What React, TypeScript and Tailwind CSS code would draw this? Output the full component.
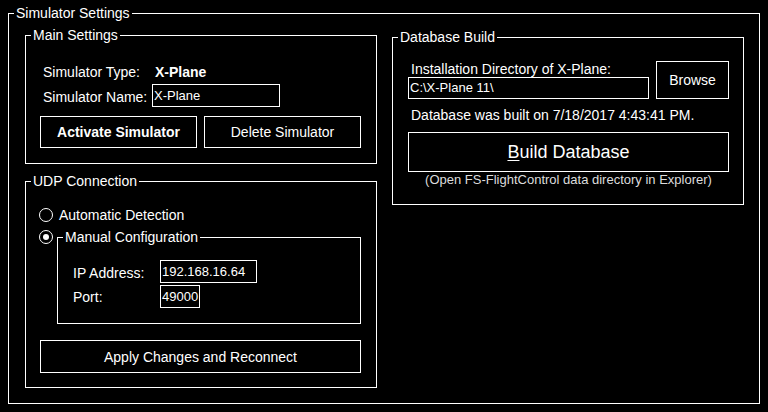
import React from "react";

type GroupProps = {
  title: string;
  className?: string;
  children?: React.ReactNode;
};

// WinForms-like group box: a fieldset with its legend sitting on the top border
const Group: React.FC<GroupProps> = ({ title, className = "", children }) => (
  <fieldset className={`border border-white min-w-0 ${className}`}>
    <legend className="ml-[5px] px-[2px] text-[14px] leading-[16px]">{title}</legend>
    {children}
  </fieldset>
);

const TextBox: React.FC<{ value: string; className?: string }> = ({ value, className = "" }) => (
  <div className={`border border-white flex items-center pl-[1px] text-[13px] leading-[16px] whitespace-nowrap ${className}`}>
    {value}
  </div>
);

const Radio: React.FC<{ checked?: boolean; className?: string }> = ({ checked, className = "" }) => (
  <span
    className={`w-[14px] h-[14px] shrink-0 rounded-full border border-white flex items-center justify-center ${className}`}
  >
    {checked && <span className="w-[6px] h-[6px] rounded-full bg-white" />}
  </span>
);

const App: React.FC = () => {
  return (
    <div className="w-[768px] h-[412px] bg-black text-white pt-[5px] pl-[8px] font-['Liberation_Sans',Arial,sans-serif] text-[14px] leading-[16px] overflow-hidden">
      <Group title="Simulator Settings" className="w-[752px] h-[399px]">
        <div className="flex gap-[15px] pl-[16px] pt-[6px]">
          {/* Left column */}
          <div className="flex flex-col gap-[9px] w-[352px]">
            <Group title="Main Settings" className="h-[137px]">
              <div className="flex flex-col pl-[14px] pt-[21px]">
                <div className="flex items-center h-[16px] pl-[3px]">
                  <span className="w-[112px]">Simulator Type:</span>
                  <span className="font-bold">X-Plane</span>
                </div>
                <div className="flex items-start mt-[4px] pl-[3px]">
                  <span className="w-[109px] mt-[5px]">Simulator Name:</span>
                  <TextBox value="X-Plane" className="w-[128px] h-[23px]" />
                </div>
                <div className="flex gap-[7px] mt-[9px]">
                  <button className="w-[157px] h-[32px] border border-white bg-black font-bold">
                    Activate Simulator
                  </button>
                  <button className="w-[157px] h-[32px] border border-white bg-black">
                    Delete Simulator
                  </button>
                </div>
              </div>
            </Group>

            <Group title="UDP Connection" className="h-[215px]">
              <div className="flex flex-col pl-[14px] pt-[18px]">
                <div className="flex items-center h-[16px] -ml-[1px]">
                  <Radio />
                  <span className="ml-[6px]">Automatic Detection</span>
                </div>
                <div className="flex items-start mt-[6px] -ml-[1px]">
                  <Radio checked className="mt-[1px]" />
                  <Group title="Manual Configuration" className="ml-[4px] w-[304px] h-[95px]">
                    <div className="flex flex-col gap-[2px] pl-[15px] pt-[15px]">
                      <div className="flex items-center">
                        <span className="w-[87px] mt-[2px]">IP Address:</span>
                        <TextBox value="192.168.16.64" className="w-[97px] h-[23px]" />
                      </div>
                      <div className="flex items-center">
                        <span className="w-[87px]">Port:</span>
                        <TextBox value="49000" className="w-[40px] h-[23px]" />
                      </div>
                    </div>
                  </Group>
                </div>
                <button className="mt-[16px] w-[321px] h-[33px] border border-white bg-black">
                  Apply Changes and Reconnect
                </button>
              </div>
            </Group>
          </div>

          {/* Right column */}
          <Group title="Database Build" className="w-[352px] h-[176px] mt-[2px]">
            <div className="flex flex-col pl-[15px] pt-[16px]">
              <div className="flex items-end">
                <div className="flex flex-col w-[241px]">
                  <span className="pl-[3px] h-[16px]">Installation Directory of X-Plane:</span>
                  <TextBox value="C:\X-Plane 11\" className="w-[241px] h-[22px]" />
                </div>
                <button className="ml-[7px] w-[73px] h-[38px] border border-white bg-black">Browse</button>
              </div>
              <span className="mt-[8px] pl-[3px] h-[16px]">Database was built on 7/18/2017 4:43:41 PM.</span>
              <button className="mt-[9px] w-[321px] h-[40px] border border-white bg-black text-[18px] leading-[20px]">
                <span className="underline underline-offset-2">B</span>uild Database
              </button>
              <span className="w-[321px] h-[16px] text-center text-[13px] text-[#dcdcdc]">
                (Open FS-FlightControl data directory in Explorer)
              </span>
            </div>
          </Group>
        </div>
      </Group>
    </div>
  );
};

export default App;
